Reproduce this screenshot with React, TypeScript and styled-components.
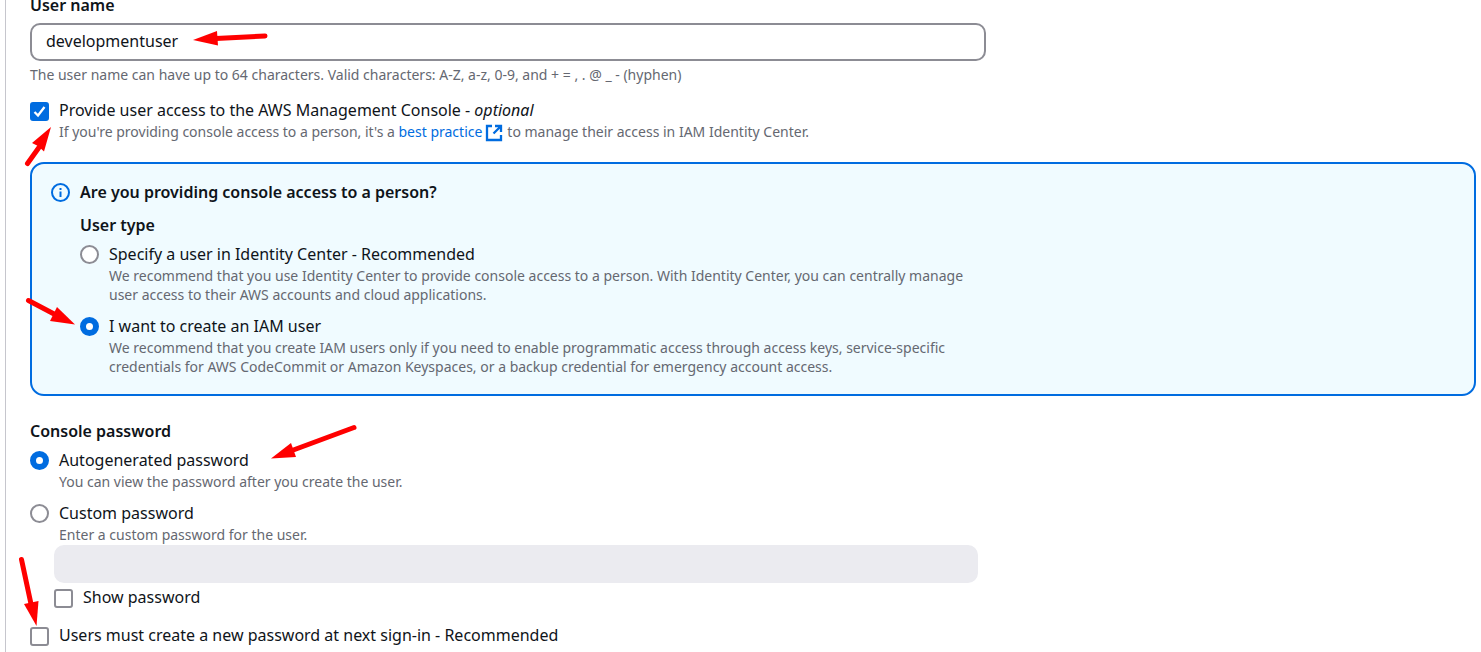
import React, { useState } from "react";
import styled, { createGlobalStyle, css } from "styled-components";

const color = {
  text: "#0f141a",
  muted: "#656871",
  border: "#8c8c94",
  blue: "#006ce0",
  infoBg: "#f0fbff",
  disabled: "#ebebf0",
  arrow: "#ff0000",
};

const GlobalStyle = createGlobalStyle`
  * { box-sizing: border-box; }
  body {
    margin: 0;
    background: #fff;
    color: ${color.text};
    font-family: "Noto Sans", "Open Sans", sans-serif;
    font-size: 16px;
    line-height: 24px;
    overflow-x: hidden;
  }
`;

const Page = styled.main`
  position: relative;
  padding-left: 5px;
  overflow: hidden;
`;

const Panel = styled.form`
  min-height: calc(100vh + 7px);
  border-left: 1px solid #c6c6cd;
  padding: 0 5px 4px 24px;
  margin-top: -7px;
`;

const Section = styled.section<{ $top?: number }>`
  display: flex;
  flex-direction: column;
  margin-top: ${(p) => p.$top ?? 0}px;
`;

const headingText = css`
  font-size: 16px;
  line-height: 24px;
  font-weight: 600;
`;

const FieldLabel = styled.label`
  ${headingText}
`;

const GroupTitle = styled.legend`
  ${headingText}
  padding: 0;
`;

const AlertTitle = styled.h2`
  ${headingText}
  margin: 0;
`;

const TextField = styled.input`
  width: 100%;
  max-width: 956px;
  height: 38px;
  margin-top: 6px;
  padding: 0 14px 2px;
  border: 2px solid ${color.border};
  border-radius: 10px;
  background: #fff;
  color: ${color.text};
  font: inherit;
  outline: none;

  &:disabled {
    max-width: 924px;
    margin-top: 0;
    border-color: ${color.disabled};
    background: ${color.disabled};
  }
`;

const Hint = styled.p`
  max-width: 868px;
  margin: 0;
  color: ${color.muted};
  font-size: 14px;
  line-height: 19px;
`;

const FieldHint = styled(Hint)`
  margin-top: 4px;
`;

const Group = styled.fieldset`
  min-width: 0;
  margin: 0;
  padding: 0;
  border: 0;
`;

const Options = styled.div<{ $gap: number }>`
  display: flex;
  flex-direction: column;
  gap: ${(p) => p.$gap}px;
  margin-top: 5px;
`;

const Choice = styled.div`
  display: grid;
  grid-template-columns: 19px 1fr;
  column-gap: 10px;
`;

const ChoiceBody = styled.div`
  display: flex;
  flex-direction: column;
`;

const ControlBox = styled.span<{ $top?: number }>`
  display: grid;
  width: 19px;
  height: 19px;
  margin-top: ${(p) => p.$top ?? 3}px;

  > * {
    grid-area: 1 / 1;
  }
`;

const controlBase = css`
  appearance: none;
  width: 19px;
  height: 19px;
  margin: 0;
  border: 2px solid ${color.border};
  background: #fff;
`;

const Checkbox = styled.input.attrs({ type: "checkbox" })`
  ${controlBase}
  border-radius: 3px;

  &:checked {
    border-color: ${color.blue};
    background: ${color.blue};
  }
`;

const Radio = styled.input.attrs({ type: "radio" })`
  ${controlBase}
  border-radius: 50%;

  &:checked {
    border: 6px solid ${color.blue};
  }
`;

const Tick = styled.svg`
  width: 19px;
  height: 19px;
  pointer-events: none;
`;

const Link = styled.a`
  color: ${color.blue};
  text-decoration: none;
`;

const ExternalIcon = styled.svg`
  width: 18px;
  height: 18px;
  margin: 0 4px 0 3px;
  vertical-align: -5px;
`;

const Alert = styled.section`
  display: grid;
  grid-template-columns: 19px 1fr;
  column-gap: 10px;
  margin-top: 20px;
  padding: 16px 19px 18px;
  border: 2px solid ${color.blue};
  border-radius: 14px;
  background: ${color.infoBg};
`;

const InfoIcon = styled.svg`
  width: 19px;
  height: 19px;
  margin-top: 3px;
`;

const AlertBody = styled.div`
  display: flex;
  flex-direction: column;
  gap: 9px;
`;

const Nested = styled.div`
  display: flex;
  flex-direction: column;
  gap: 2px;
  margin-top: 1px;
  padding-left: 24px;
`;

const Annotations = styled.svg`
  position: absolute;
  top: 0;
  left: 0;
  width: 400px;
  height: 652px;
  pointer-events: none;
`;

type CheckProps = {
  id: string;
  label: React.ReactNode;
  hint?: React.ReactNode;
  initial?: boolean;
};

function CheckOption({ id, label, hint, initial = false }: CheckProps) {
  const [checked, setChecked] = useState(initial);
  return (
    <Choice>
      <ControlBox $top={4}>
        <Checkbox id={id} checked={checked} onChange={() => setChecked(!checked)} />
        {checked && (
          <Tick viewBox="0 0 19 19" aria-hidden="true">
            <path d="M4.5 10 8 13.5 14.5 5" fill="none" stroke="#fff" strokeWidth="2.3" />
          </Tick>
        )}
      </ControlBox>
      <ChoiceBody>
        <label htmlFor={id}>{label}</label>
        {hint && <Hint>{hint}</Hint>}
      </ChoiceBody>
    </Choice>
  );
}

type RadioProps = {
  id: string;
  name: string;
  label: string;
  hint: string;
  checked: boolean;
  onSelect: (id: string) => void;
};

function RadioOption({ id, name, label, hint, checked, onSelect }: RadioProps) {
  return (
    <Choice>
      <ControlBox>
        <Radio id={id} name={name} checked={checked} onChange={() => onSelect(id)} />
      </ControlBox>
      <ChoiceBody>
        <label htmlFor={id}>{label}</label>
        <Hint>{hint}</Hint>
      </ChoiceBody>
    </Choice>
  );
}

const arrows = [
  { shaft: "M265 36 216 38.500", head: "193,40 217,31 218,45.500" },
  { shaft: "M27.500 163.500 40 146", head: "51,127 32,143 38,146 44,151.500" },
  { shaft: "M28.500 300.500 56 315", head: "75,324.500 57,307 50,321" },
  { shaft: "M354 427.500 292 450.500", head: "271,458.500 291,443 296,457" },
  { shaft: "M21.500 559.500 31 604", head: "36.500,626 24,604 38.500,601" },
];

export default function App() {
  const [userName, setUserName] = useState("developmentuser");
  const [userType, setUserType] = useState("iam-user");
  const [passwordType, setPasswordType] = useState("autogenerated");

  return (
    <Page>
      <GlobalStyle />
      <Panel>
        <Section>
          <FieldLabel htmlFor="user-name">User name</FieldLabel>
          <TextField
            id="user-name"
            type="text"
            value={userName}
            onChange={(e) => setUserName(e.target.value)}
          />
          <FieldHint>
            The user name can have up to 64 characters. Valid characters: A-Z, a-z, 0-9, and + = , . @ _ - (hyphen)
          </FieldHint>
        </Section>

        <Section $top={14}>
          <CheckOption
            id="console-access"
            initial
            label={
              <>
                Provide user access to the AWS Management Console - <em>optional</em>
              </>
            }
            hint={
              <>
                If you're providing console access to a person, it's a{" "}
                <Link href="#best-practice">
                  best practice
                  <ExternalIcon viewBox="0 0 18 18" aria-hidden="true">
                    <path
                      d="M7 2H2v14h14v-5M10 2h6v6M16 2 8.500 9.500"
                      fill="none"
                      stroke="currentColor"
                      strokeWidth="2.300"
                    />
                  </ExternalIcon>
                </Link>
                to manage their access in IAM Identity Center.
              </>
            }
          />
        </Section>

        <Alert>
          <InfoIcon viewBox="0 0 19 19" fill="none" stroke={color.blue} strokeWidth="2" aria-hidden="true">
            <circle cx="9.500" cy="9.500" r="8.500" />
            <path d="M9.500 8.500V14M9.500 5v2" />
          </InfoIcon>
          <AlertBody>
            <AlertTitle>Are you providing console access to a person?</AlertTitle>
            <Group>
              <GroupTitle>User type</GroupTitle>
              <Options $gap={10}>
                <RadioOption
                  id="identity-center"
                  name="user-type"
                  label="Specify a user in Identity Center - Recommended"
                  hint="We recommend that you use Identity Center to provide console access to a person. With Identity Center, you can centrally manage user access to their AWS accounts and cloud applications."
                  checked={userType === "identity-center"}
                  onSelect={setUserType}
                />
                <RadioOption
                  id="iam-user"
                  name="user-type"
                  label="I want to create an IAM user"
                  hint="We recommend that you create IAM users only if you need to enable programmatic access through access keys, service-specific credentials for AWS CodeCommit or Amazon Keyspaces, or a backup credential for emergency account access."
                  checked={userType === "iam-user"}
                  onSelect={setUserType}
                />
              </Options>
            </Group>
          </AlertBody>
        </Alert>

        <Section $top={23}>
          <Group>
            <GroupTitle>Console password</GroupTitle>
            <Options $gap={10}>
              <RadioOption
                id="autogenerated"
                name="password-type"
                label="Autogenerated password"
                hint="You can view the password after you create the user."
                checked={passwordType === "autogenerated"}
                onSelect={setPasswordType}
              />
              <RadioOption
                id="custom"
                name="password-type"
                label="Custom password"
                hint="Enter a custom password for the user."
                checked={passwordType === "custom"}
                onSelect={setPasswordType}
              />
            </Options>
          </Group>
          <Nested>
            <TextField
              type="password"
              aria-label="Custom password"
              disabled={passwordType !== "custom"}
            />
            <CheckOption id="show-password" label="Show password" />
          </Nested>
        </Section>

        <Section $top={14}>
          <CheckOption
            id="reset-password"
            label="Users must create a new password at next sign-in - Recommended"
          />
        </Section>
      </Panel>

      <Annotations viewBox="0 0 400 652" aria-hidden="true">
        {arrows.map((a) => (
          <g key={a.head}>
            <path d={a.shaft} stroke={color.arrow} strokeWidth="5" strokeLinecap="round" />
            <polygon points={a.head} fill={color.arrow} />
          </g>
        ))}
      </Annotations>
    </Page>
  );
}
